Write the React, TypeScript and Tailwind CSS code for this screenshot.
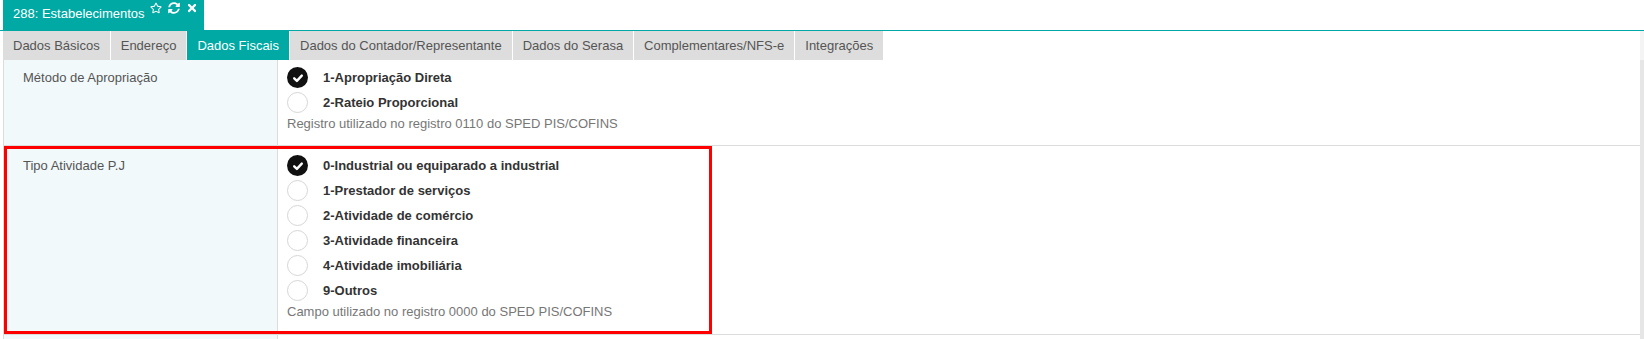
import { FaRegStar, FaSyncAlt, FaTimes } from "react-icons/fa";

const TABS = [
  "Dados Básicos",
  "Endereço",
  "Dados Fiscais",
  "Dados do Contador/Representante",
  "Dados do Serasa",
  "Complementares/NFS-e",
  "Integrações",
];

type Field = {
  label: string;
  options: string[];
  selected: number;
  help: string;
  pt: string;
  pb: string;
};

const FIELDS: Field[] = [
  {
    label: "Método de Apropriação",
    options: ["1-Apropriação Direta", "2-Rateio Proporcional"],
    selected: 0,
    help: "Registro utilizado no registro 0110 do SPED PIS/COFINS",
    pt: "pt-[5px]",
    pb: "pb-[13px]",
  },
  {
    label: "Tipo Atividade P.J",
    options: [
      "0-Industrial ou equiparado a industrial",
      "1-Prestador de serviços",
      "2-Atividade de comércio",
      "3-Atividade financeira",
      "4-Atividade imobiliária",
      "9-Outros",
    ],
    selected: 0,
    help: "Campo utilizado no registro 0000 do SPED PIS/COFINS",
    pt: "pt-[7px]",
    pb: "pb-[14px]",
  },
];

function Radio({ checked }: { checked: boolean }) {
  if (checked) {
    return (
      <span className="w-[21px] h-[21px] rounded-full bg-[#111] flex items-center justify-center shrink-0">
        <svg width="12" height="12" viewBox="0 0 12 12">
          <path d="M2.2 6.3 L4.9 8.9 L9.8 3.6" fill="none" stroke="#fff" strokeWidth="2.4" strokeLinecap="round" strokeLinejoin="round" />
        </svg>
      </span>
    );
  }
  return <span className="w-[21px] h-[21px] rounded-full bg-white border border-[#d6d6d6] shrink-0" />;
}

function FieldRow({ field }: { field: Field }) {
  return (
    <div className="flex border-b border-[#dcdcdc]">
      <div className={`w-[275px] shrink-0 bg-[#f1f9fb] border-l border-r border-[#dcdcdc] pl-[19px] ${field.pt} text-[13px] leading-[25px] text-[#555]`}>
        {field.label}
      </div>
      <div className={`flex-1 pl-[9px] ${field.pt} ${field.pb}`}>
        {field.options.map((opt, i) => (
          <div key={opt} className="h-[25px] flex items-center gap-[15px]">
            <Radio checked={i === field.selected} />
            <span className="text-[13px] font-bold text-[#333]">{opt}</span>
          </div>
        ))}
        <div className="mt-[1px] h-[16px] leading-[16px] text-[13px] text-[#777]">{field.help}</div>
      </div>
    </div>
  );
}

export default function App() {
  return (
    <div className="relative w-[1644px] h-[339px] bg-white overflow-hidden font-['Liberation_Sans',Arial,sans-serif]">
      {/* window title */}
      <div className="h-[31px] border-b border-[#00a9a4] flex">
        <div className="ml-[3px] w-[201px] h-[30px] bg-[#00a9a4] text-white flex pl-[10px]">
          <span className="text-[13px] leading-[28px]">288: Estabelecimentos</span>
          <div className="flex items-start gap-[6px] ml-[5px] mt-[2px]">
            <FaRegStar className="w-[12px] h-[12px]" />
            <FaSyncAlt className="w-[12px] h-[12px]" />
            <FaTimes className="w-[12px] h-[12px]" />
          </div>
        </div>
      </div>

      <div className="flex">
        <div className="ml-[3px] w-[1637px]">
          {/* tabs */}
          <div className="h-[29px] flex">
            {TABS.map((t) => (
              <div
                key={t}
                className={`h-full flex items-center px-[10px] mr-px text-[13px] ${
                  t === "Dados Fiscais" ? "bg-[#00a9a4] text-white" : "bg-[#dddddd] text-[#555]"
                }`}
              >
                {t}
              </div>
            ))}
          </div>

          {FIELDS.map((f) => (
            <FieldRow key={f.label} field={f} />
          ))}
          <div className="flex h-[10px]">
            <div className="w-[275px] bg-[#f1f9fb] border-l border-r border-[#dcdcdc]" />
          </div>
        </div>
        {/* scrollbar */}
        <div className="w-[4px] flex flex-col">
          <div className="h-[29px] bg-[#f4f4f4]" />
          <div className="flex-1 bg-[#e6e6e6]" />
        </div>
      </div>

      {/* highlight box */}
      <div className="absolute left-[4px] top-[146px] w-[708px] h-[188px] border-[3px] border-[#ff0000]" />
    </div>
  );
}
